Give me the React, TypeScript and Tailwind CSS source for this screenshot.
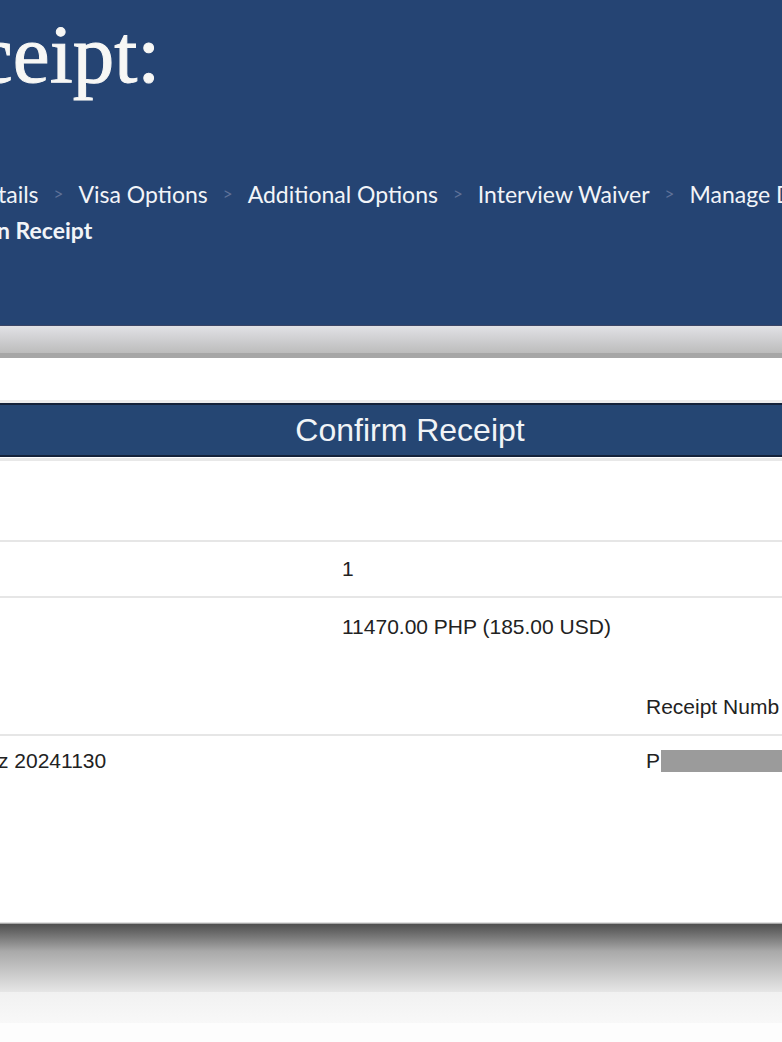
export default function App() {
  const crumbs = ["Visa Options", "Additional Options", "Interview Waiver", "Manage D"]

  return (
    <div className="w-[782px] h-[1042px] overflow-hidden bg-white font-['Liberation_Sans',Arial,sans-serif] text-[#222]">
      {/* page header */}
      <header className="h-[325px] bg-[#254473] overflow-hidden">
        <h1 className="pt-[11px] -ml-[24px] whitespace-nowrap font-['Liberation_Serif',serif] text-[83px] leading-[86px] text-[#f7f7f5] [-webkit-text-stroke:1px_#f7f7f5]">
          ceipt:
        </h1>
        <nav className="mt-[79px] font-['Lato',sans-serif] text-[23px] leading-[36px] text-[#f2f4f8]">
          <div className="flex items-center gap-[15px] whitespace-nowrap">
            <span className="-ml-[2px]">tails</span>
            {crumbs.map((c) => (
              <span key={c} className="flex items-center gap-[15px]">
                <span className="text-[17px] text-[#5f7299]">&gt;</span>
                <span>{c}</span>
              </span>
            ))}
          </div>
          <div className="-ml-[3px] font-bold">n Receipt</div>
        </nav>
      </header>

      {/* grey band under header */}
      <div className="h-[1px] bg-[#3c4666]" />
      <div className="h-[27px] bg-gradient-to-b from-[#e2e2e6] to-[#bcbcbc]" />
      <div className="h-[5px] bg-[#a6a6a6]" />

      <div className="h-[42px]" />

      {/* confirm receipt table */}
      <section className="text-[21px] leading-[24px]">
        <div className="h-[3px] bg-[#ececec]" />
        <div className="h-[54px] border-y-2 border-[#14223a] bg-[#254673] flex items-center justify-center pl-[38px]">
          <span className="text-[32px] text-[#f1f4f7]">Confirm Receipt</span>
        </div>
        <div className="h-[1px]" />
        <div className="h-[3px] bg-[#e8e8e8]" />

        <div className="h-[81px] border-b-2 border-[#e6e6e6]" />

        <div className="h-[56px] border-b-2 border-[#e6e6e6] grid grid-cols-[342px_304px_1fr] items-center">
          <div />
          <div>1</div>
          <div />
        </div>

        <div className="h-[58px] grid grid-cols-[342px_304px_1fr] items-center">
          <div />
          <div className="whitespace-nowrap">11470.00 PHP (185.00 USD)</div>
          <div />
        </div>

        <div className="h-[80px] border-b-2 border-[#e6e6e6] grid grid-cols-[342px_304px_1fr] items-end pb-[15px]">
          <div />
          <div />
          <div className="whitespace-nowrap">Receipt Numb</div>
        </div>

        <div className="h-[50px] grid grid-cols-[342px_304px_1fr] items-center">
          <div className="-ml-[2px] whitespace-nowrap">z 20241130</div>
          <div />
          <div className="flex items-center">
            <span>P</span>
            <span className="ml-[1px] h-[22px] flex-1 bg-[#9b9b9b]" />
          </div>
        </div>

        <div className="h-[136px]" />
      </section>

      {/* bottom shadow */}
      <div className="h-[1px] bg-[#e0e0e0]" />
      <div className="h-[1px] bg-[#a8a8a8]" />
      <div className="h-[68px] bg-gradient-to-b from-[#4f4f4f] via-[#a9a9a9] via-40% to-[#e6e6e6]" />
      <div className="h-[31px] bg-gradient-to-b from-[#f1f1f1] to-[#f8f8f8]" />
      <div className="h-[20px] bg-[#fdfdfd]" />
    </div>
  )
}
